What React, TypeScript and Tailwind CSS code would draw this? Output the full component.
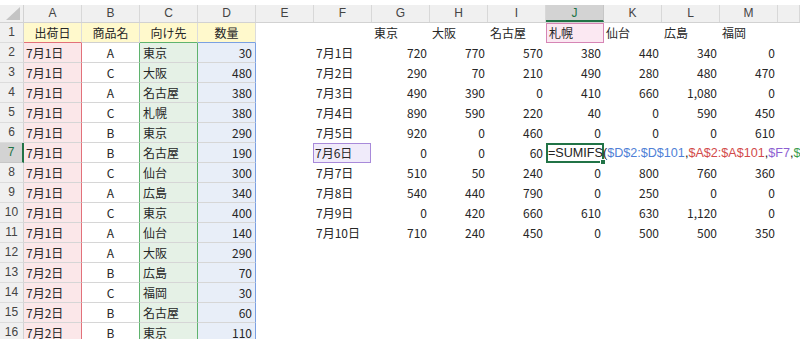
import React from 'react';

const COLS = ['A', 'B', 'C', 'D', 'E', 'F', 'G', 'H', 'I', 'J', 'K', 'L', 'M', ''];

const leftData: string[][] = [
  ['出荷日', '商品名', '向け先', '数量'],
  ['7月1日', 'A', '東京', '30'],
  ['7月1日', 'C', '大阪', '480'],
  ['7月1日', 'A', '名古屋', '380'],
  ['7月1日', 'C', '札幌', '380'],
  ['7月1日', 'B', '東京', '290'],
  ['7月1日', 'B', '名古屋', '190'],
  ['7月1日', 'C', '仙台', '300'],
  ['7月1日', 'A', '広島', '340'],
  ['7月1日', 'C', '東京', '400'],
  ['7月1日', 'A', '仙台', '140'],
  ['7月1日', 'A', '大阪', '290'],
  ['7月2日', 'B', '広島', '70'],
  ['7月2日', 'C', '福岡', '30'],
  ['7月2日', 'B', '名古屋', '60'],
  ['7月2日', 'B', '東京', '110'],
];

const rightData: string[][] = [
  ['', '東京', '大阪', '名古屋', '札幌', '仙台', '広島', '福岡'],
  ['7月1日', '720', '770', '570', '380', '440', '340', '0'],
  ['7月2日', '290', '70', '210', '490', '280', '480', '470'],
  ['7月3日', '490', '390', '0', '410', '660', '1,080', '0'],
  ['7月4日', '890', '590', '220', '40', '0', '590', '450'],
  ['7月5日', '920', '0', '460', '0', '0', '0', '610'],
  ['7月6日', '0', '0', '60', '', '', '', ''],
  ['7月7日', '510', '50', '240', '0', '800', '760', '360'],
  ['7月8日', '540', '440', '790', '0', '250', '0', '0'],
  ['7月9日', '0', '420', '660', '610', '630', '1,120', '0'],
  ['7月10日', '710', '240', '450', '0', '500', '500', '350'],
];

const base =
  'h-[20px] shrink-0 whitespace-nowrap overflow-hidden border-b text-[12px] leading-[19px] text-[#262626]';

function Cell({ r, c }: { r: number; c: number }) {
  const w = c === 13 ? 'w-[22px]' : 'w-[58px]';
  if (c <= 3 && r <= 16) {
    const v = leftData[r - 1][c];
    if (r === 1) {
      const bb =
        c === 0
          ? 'border-b-[#e2717a]'
          : c === 1
          ? 'border-b-[#d0d0d0]'
          : c === 2
          ? 'border-b-[#5fb36e]'
          : 'border-b-[#7aa0e2]';
      return (
        <div className={`${base} ${w} ${bb} bg-[#fff9cc] text-center border-r border-r-[#dcdcdc] text-[#333]`}>
          {v}
        </div>
      );
    }
    if (c === 0)
      return (
        <div className={`${base} ${w} border-b-[#d6d6d6] bg-[#fbe7e9] border-r border-r-[#e2717a] px-[2px] text-left`}>
          {v}
        </div>
      );
    if (c === 1)
      return (
        <div className={`${base} ${w} border-b-[#d6d6d6] bg-white border-r border-r-[#5fb36e] text-center`}>
          {v}
        </div>
      );
    if (c === 2)
      return (
        <div className={`${base} ${w} border-b-[#d6d6d6] bg-[#e5f1e6] border-r border-r-[#5fb36e] px-[3px] text-left`}>
          {v}
        </div>
      );
    return (
      <div className={`${base} ${w} border-b-[#d6d6d6] bg-[#e8eef8] border-r border-r-[#7aa0e2] px-[3px] text-right`}>
        {v}
      </div>
    );
  }
  if (c >= 5 && c <= 12 && r <= 11) {
    const v = rightData[r - 1][c - 5];
    if (r === 1 && c === 9) {
      return (
        <div className={`h-[20px] shrink-0 whitespace-nowrap overflow-hidden ${w} border border-[#d685b5] bg-[#fbe8f2] text-[12px] leading-[18px] text-[#262626] px-[2px]`}>
          {v}
        </div>
      );
    }
    if (r === 7 && c === 5) {
      return (
        <div className={`h-[20px] shrink-0 whitespace-nowrap overflow-hidden ${w} border border-[#a88ada] bg-[#f0ebfa] text-[12px] leading-[18px] text-[#262626] px-[1px] -ml-px mr-px`}>
          {v}
        </div>
      );
    }
    if (r === 7 && c === 9) {
      return (
        <div className={`relative z-10 h-[20px] shrink-0 ${w} border-2 border-[#217346] bg-white`}>
          <div className="whitespace-nowrap text-[12.6px] leading-[16px] text-[#222] font-['Liberation_Sans',sans-serif]">
            =SUMIFS(
            <span className="text-[#4f7fd6]">$D$2:$D$101</span>,
            <span className="text-[#d24a4a]">$A$2:$A$101</span>,
            <span className="text-[#8d5fd2]">$F7</span>,
            <span className="text-[#3a9c4c]">$C$2:$C$101</span>,
            <span className="text-[#c04c94]">J$1</span>)
          </div>
          <div className="absolute -right-[4px] -bottom-[4px] w-[6px] h-[6px] bg-[#217346] border border-white" />
        </div>
      );
    }
    const align = r === 1 || c === 5 ? 'text-left px-[2px]' : 'text-right px-[3px]';
    return <div className={`${base} ${w} border-b-transparent ${align}`}>{v}</div>;
  }
  return <div className={`${base} ${w} border-b-transparent`} />;
}

export default function App() {
  const rows = Array.from({ length: 16 }, (_, i) => i + 1);
  return (
    <div className="w-[800px] h-[339px] overflow-hidden bg-white font-['Noto_Sans_CJK_JP',sans-serif]">
      <div className="pt-[5px] bg-white">
        <div className="flex h-[18px] bg-[#f0f0f0] border-b border-[#d2d2d2]">
          <div className="w-[24px] shrink-0 border-r border-[#d2d2d2] flex items-end justify-end pr-[3px] pb-[2px]">
            <svg width="14" height="13" viewBox="0 0 14 13">
              <polygon points="14,0 14,13 0,13" fill="#c4c4c4" />
            </svg>
          </div>
          {COLS.map((l, i) =>
            i === 9 ? (
              <div
                key={i}
                className="w-[58px] shrink-0 bg-[#d3d3d3] border-r border-[#c6c6c6] border-b-2 border-b-[#217346] text-center text-[12px] leading-[17px] text-[#217346] font-['Liberation_Sans',sans-serif]"
              >
                {l}
              </div>
            ) : (
              <div
                key={i}
                className={`${i === 13 ? 'w-[22px]' : 'w-[58px]'} shrink-0 border-r border-[#d8d8d8] text-center text-[12px] leading-[17px] text-[#444] font-['Liberation_Sans',sans-serif]`}
              >
                {l}
              </div>
            )
          )}
        </div>
      </div>
      {rows.map((r) => (
        <div key={r} className="flex h-[20px]">
          {r === 7 ? (
            <div className="w-[24px] shrink-0 h-[20px] bg-[#d3d3d3] border-r-2 border-r-[#217346] border-b border-b-[#c6c6c6] text-center text-[12px] leading-[19px] text-[#217346] font-['Liberation_Sans',sans-serif]">
              {r}
            </div>
          ) : (
            <div className="w-[24px] shrink-0 h-[20px] bg-[#f0f0f0] border-r border-r-[#d2d2d2] border-b border-b-[#dcdcdc] text-center text-[12px] leading-[19px] text-[#444] font-['Liberation_Sans',sans-serif]">
              {r}
            </div>
          )}
          {COLS.map((_, c) => (
            <Cell key={c} r={r} c={c} />
          ))}
        </div>
      ))}
    </div>
  );
}
